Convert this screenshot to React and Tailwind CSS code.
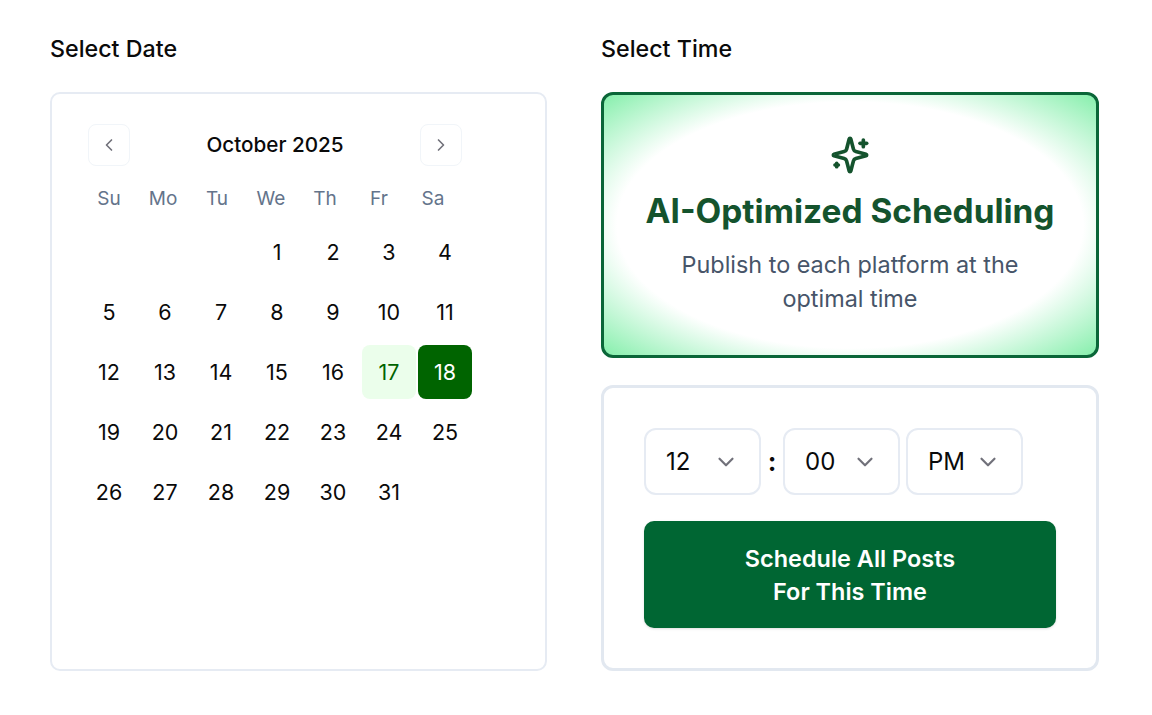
import React from "react";
import { ChevronLeft, ChevronRight, ChevronDown } from "lucide-react";

const WEEKDAYS = ["Su", "Mo", "Tu", "We", "Th", "Fr", "Sa"];
// october 2025 starts on a wednesday
const DAYS = [null, null, null, ...Array.from({ length: 31 }, (_, i) => i + 1)];

function NavButton({ children }) {
  return (
    <button className="flex h-[42px] w-[42px] items-center justify-center rounded-[8px] border border-[#f1f5f9] bg-white text-[#71717a]">
      {children}
    </button>
  );
}

function DayCell({ day }) {
  if (!day) return <div className="h-[54px] w-[54px]" />;
  let tone = "text-[#0a0a0a]";
  if (day === 17) tone = "bg-[#ebfeeb] text-[#006400]";
  if (day === 18) tone = "bg-[#006400] text-white";
  return (
    <div className={`flex h-[54px] w-[54px] items-center justify-center rounded-[8px] text-[21.5px] ${tone}`}>
      {day}
    </div>
  );
}

function Calendar() {
  return (
    <div className="h-[579px] rounded-[10px] border-2 border-[#e6ebf3] p-[30px]">
      <div className="flex w-[386px] items-center justify-between px-[6px]">
        <NavButton>
          <ChevronLeft size={20} strokeWidth={2} />
        </NavButton>
        <div className="text-[20.7px] font-medium text-[#0a0a0a]">October 2025</div>
        <NavButton>
          <ChevronRight size={20} strokeWidth={2} />
        </NavButton>
      </div>
      <div className="mt-[17px] flex">
        {WEEKDAYS.map((d) => (
          <div key={d} className="w-[54px] text-center text-[19px] leading-[32px] text-[#64748b]">
            {d}
          </div>
        ))}
      </div>
      <div className="mt-[10px] grid grid-cols-[repeat(7,54px)] gap-x-[2px] gap-y-[6px]">
        {DAYS.map((d, i) => (
          <DayCell key={i} day={d} />
        ))}
      </div>
    </div>
  );
}

function TimeSelect({ value }) {
  return (
    <div className="flex h-[67px] w-[117px] items-center rounded-[12px] border-2 border-[#e6ebf3] pl-[20px] text-[24px] text-[#0a0a0a]">
      <span className="flex-1">{value}</span>
      <ChevronDown size={26} strokeWidth={2} className="mr-[20px] text-[#71717a]" />
    </div>
  );
}

function SparkIcon() {
  return (
    <svg
      width="40"
      height="40"
      viewBox="0 0 24 24"
      fill="none"
      stroke="currentColor"
      strokeWidth="2.2"
      strokeLinecap="round"
      strokeLinejoin="round"
      className="text-[#14532d]"
    >
      <path d="M9.937 15.5A2 2 0 0 0 8.5 14.063l-6.135-1.582a.5.5 0 0 1 0-.962L8.5 9.936A2 2 0 0 0 9.937 8.5l1.582-6.135a.5.5 0 0 1 .963 0L14.063 8.5A2 2 0 0 0 15.5 9.937l6.135 1.581a.5.5 0 0 1 0 .964L15.5 14.063a2 2 0 0 0-1.437 1.437l-1.582 6.135a.5.5 0 0 1-.963 0z" />
      <path d="M20 3v4" />
      <path d="M22 5h-4" />
      <path d="M4 17v2" />
      <path d="M5 18H3" />
    </svg>
  );
}

export default function App() {
  return (
    <div className="flex h-[715px] gap-[54px] bg-white pl-[50px] pt-[32px] font-['Inter',sans-serif]">
      <div className="w-[497px]">
        <h2 className="mb-[27px] text-[23.25px] leading-[33px] font-medium text-[#0a0a0a]">Select Date</h2>
        <Calendar />
      </div>
      <div className="w-[498px]">
        <h2 className="mb-[27px] text-[23.25px] leading-[33px] font-medium text-[#0a0a0a]">Select Time</h2>
        <div className="flex h-[266px] flex-col items-center rounded-[12px] border-[3px] border-[#0a6638] bg-[radial-gradient(ellipse_at_center,#ffffff_67%,#86efac_100%)] pt-[40px] text-center">
          <SparkIcon />
          <h3 className="mt-[14px] text-[33.4px] leading-[44px] font-bold text-[#14532d]">AI-Optimized Scheduling</h3>
          <p className="mt-[15px] w-[400px] text-[23.4px] leading-[34px] text-[#475569]">
            Publish to each platform at the optimal time
          </p>
        </div>
        <div className="mt-[27px] h-[286px] rounded-[12px] border-[3px] border-[#e2e8f0] p-[40px]">
          <div className="flex items-center">
            <TimeSelect value="12" />
            <span className="w-[22px] text-center text-[26px] font-bold text-[#0a0a0a]">:</span>
            <TimeSelect value="00" />
            <div className="w-[6px]" />
            <TimeSelect value="PM" />
          </div>
          <button className="mt-[26px] block h-[107px] w-[412px] rounded-[10px] bg-[#006633] text-[23.45px] leading-[33px] font-semibold text-white shadow-sm">
            Schedule All Posts
            <br />
            For This Time
          </button>
        </div>
      </div>
    </div>
  );
}
